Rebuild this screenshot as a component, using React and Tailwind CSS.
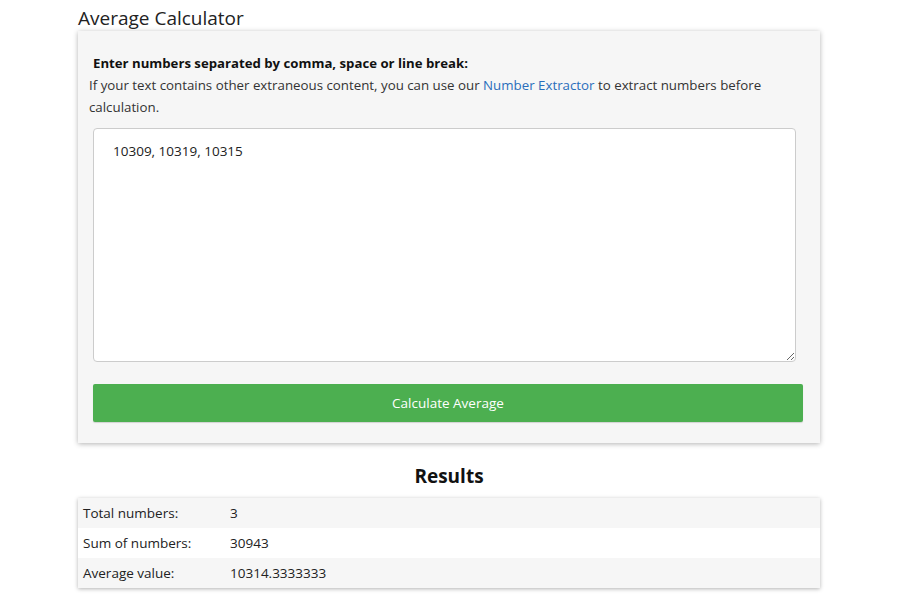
import React, { useState } from 'react';

const rows = [
  { label: 'Total numbers:', value: '3', bg: 'bg-[#f6f6f6]' },
  { label: 'Sum of numbers:', value: '30943', bg: 'bg-white' },
  { label: 'Average value:', value: '10314.3333333', bg: 'bg-[#f6f6f6]' },
];

export default function App() {
  const [text, setText] = useState('10309, 10319, 10315');

  return (
    <div className="min-h-[600px] bg-white font-['Open_Sans','Liberation_Sans',sans-serif] text-[#212529]">
      <div className="ml-[78px] w-[742px]">
        {/* Title */}
        <h1 className="pt-[5px] text-[19px] leading-[26px] text-[#222]">Average Calculator</h1>

        {/* Input card */}
        <div className="bg-[#f6f6f6] shadow-[0_1px_5px_rgba(0,0,0,0.3)] pt-[22px] pb-[21px] pl-[15px] pr-[17px]">
          <div className="text-[13.2px] font-bold leading-[21px] text-[#111]">
            Enter numbers separated by comma, space or line break:
          </div>
          <p className="mt-[1px] -ml-[4px] text-[13.3px] leading-[21.5px] text-[#333]">
            If your text contains other extraneous content, you can use our{' '}
            <a href="#" className="text-[#2a6ebb]">Number Extractor</a> to extract numbers before calculation.
          </p>
          <textarea
            value={text}
            onChange={e => setText(e.target.value)}
            className="mt-[10px] block w-[703px] h-[234px] bg-white border border-[#ccc] rounded-[4px] px-[19px] py-[12px] text-[13.5px] leading-[20px] text-[#222] outline-none"
          />
          <button className="mt-[22px] block w-full h-[38px] bg-[#4caf50] rounded-[2px] text-white text-[13.5px] shadow-[0_1px_1px_rgba(0,0,0,0.15)]">
            Calculate Average
          </button>
        </div>

        {/* Results */}
        <h2 className="mt-[21px] text-center text-[19px] font-bold leading-[24px] text-[#111]">Results</h2>
        <div className="mt-[10px] shadow-[0_1px_4px_rgba(0,0,0,0.3)]">
          {rows.map(r => (
            <div key={r.label} className={`flex h-[30px] items-center text-[13.5px] text-[#222] ${r.bg}`}>
              <div className="w-[152px] pl-[5px]">{r.label}</div>
              <div>{r.value}</div>
            </div>
          ))}
        </div>
      </div>
    </div>
  );
}
